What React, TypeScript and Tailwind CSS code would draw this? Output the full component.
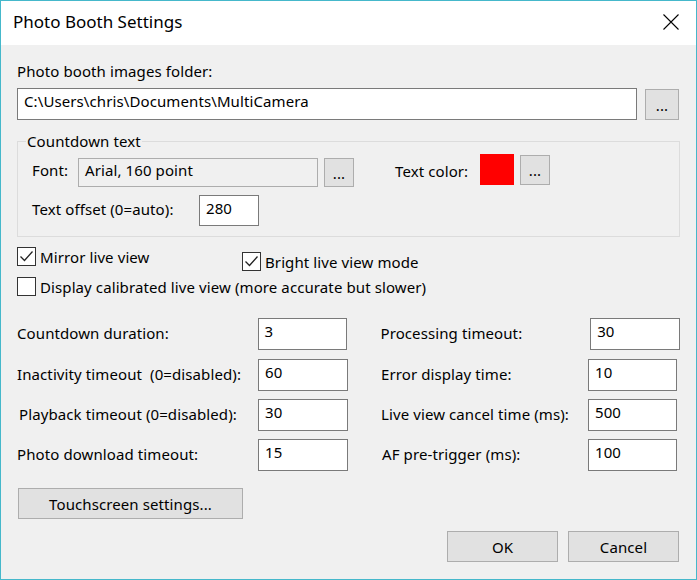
import type { ReactNode } from "react";

function Button({ className = "", children }: { className?: string; children: ReactNode }) {
  return (
    <div className={`flex items-center justify-center border border-[#adadad] bg-[#e1e1e1] ${className}`}>
      {children}
    </div>
  );
}

function TextBox({ value, className = "" }: { value: string; className?: string }) {
  return (
    <div className={`border border-[#7a7a7a] bg-white pl-[6px] pt-[2px] ${className}`}>{value}</div>
  );
}

function CheckBox({ checked, label, className = "" }: { checked: boolean; label: string; className?: string }) {
  return (
    <div className={`flex items-start ${className}`}>
      <svg width="19" height="19" viewBox="0 0 19 19" className="shrink-0">
        <rect x="0.5" y="0.5" width="18" height="18" fill="#fff" stroke="#333" />
        {checked && <polyline points="3.5,9.5 7.5,13.5 15.5,4.5" fill="none" stroke="#222" strokeWidth="1.3" />}
      </svg>
      <span className="ml-[4px]">{label}</span>
    </div>
  );
}

type Field = { label: string; value: string; labelClass?: string; inputClass?: string };

const rows: { left: Field; right: Field; mt: string }[] = [
  {
    left: { label: "Countdown duration:", value: "3" },
    right: { label: "Processing timeout:", value: "30", labelClass: "w-[210px]", inputClass: "w-[90px]" },
    mt: "mt-[21px]",
  },
  {
    left: { label: "Inactivity timeout\u00a0 (0=disabled):", value: "60" },
    right: { label: "Error display time:", value: "10" },
    mt: "mt-[9px]",
  },
  {
    left: { label: "Playback timeout (0=disabled):", value: "30", labelClass: "pl-[2px]" },
    right: { label: "Live view cancel time (ms):", value: "500" },
    mt: "mt-[8px]",
  },
  {
    left: { label: "Photo download timeout:", value: "15" },
    right: { label: "AF pre-trigger (ms):", value: "100", labelClass: "w-[207px] pl-[1px]" },
    mt: "mt-[8px]",
  },
];

export default function App() {
  return (
    <div className="flex h-[580px] w-[697px] flex-col border border-[#45b8cb] bg-[#f0f0f0] text-[15px] leading-[20px] tracking-[0.1px] text-black [font-family:'Noto_Sans','Open_Sans',sans-serif]">
      <div className="flex h-[44px] items-start justify-between bg-white">
        <div className="pl-[12px] pt-[11px] text-[17px] tracking-normal">Photo Booth Settings</div>
        <svg width="16" height="16" viewBox="0 0 16 16" className="mr-[17px] mt-[13px]">
          <path d="M0.5 0.5 L15.5 15.5 M15.5 0.5 L0.5 15.5" stroke="#000" strokeWidth="1.1" />
        </svg>
      </div>

      <div className="flex flex-col px-[16px]">
        <div className="mt-[16px]">Photo booth images folder:</div>
        <div className="mt-[7px] flex h-[32px] items-start gap-[8px]">
          <TextBox value="C:\Users\chris\Documents\MultiCamera" className="h-[32px] flex-1" />
          <Button className="mr-[1px] mt-[1px] h-[31px] w-[34px]">...</Button>
        </div>

        <fieldset className="mt-[11px] border border-[#dcdcdc] px-[8px] pb-[10px]">
          <legend className="px-[1px]">Countdown text</legend>
          <div className="pl-[6px]">
            <div className="mt-[3px] flex items-start">
              <span className="mt-[6px] w-[46px]">Font:</span>
              <div className="mt-[4px] h-[29px] w-[240px] border border-[#adadad] bg-[#f0f0f0] pl-[6px] pt-[1px]">
                Arial, 160 point
              </div>
              <Button className="ml-[6px] mt-[4px] h-[29px] w-[30px]">...</Button>
              <span className="ml-[41px] mt-[7px] w-[85px]">Text color:</span>
              <div className="h-[31px] w-[34px] bg-[#ff0000]" />
              <Button className="ml-[6px] mt-[1px] h-[30px] w-[30px]">...</Button>
            </div>
            <div className="mt-[8px] flex items-start">
              <span className="mt-[4px] w-[167px]">Text offset (0=auto):</span>
              <TextBox value="280" className="h-[31px] w-[60px]" />
            </div>
          </div>
        </fieldset>

        <div className="mt-[10px] flex items-start">
          <CheckBox checked label="Mirror live view" className="w-[225px]" />
          <CheckBox checked label="Bright live view mode" className="mt-[5px]" />
        </div>
        <CheckBox checked={false} label="Display calibrated live view (more accurate but slower)" className="mt-[5px]" />

        {rows.map((row) => (
          <div key={row.left.label} className={`flex h-[32px] items-start ${row.mt}`}>
            <span className={`mt-[5px] w-[241px] ${row.left.labelClass ?? ""}`}>{row.left.label}</span>
            <TextBox value={row.left.value} className="h-[32px] w-[90px]" />
            <span className={`ml-[33px] mt-[5px] ${row.right.labelClass ?? "w-[207px]"}`}>{row.right.label}</span>
            <TextBox value={row.right.value} className={`h-[32px] ${row.right.inputClass ?? "w-[89px]"}`} />
          </div>
        ))}

        <Button className="ml-[1px] mt-[17px] h-[31px] w-[225px]">Touchscreen settings...</Button>

        <div className="mr-[1px] mt-[12px] flex justify-end gap-[10px]">
          <Button className="h-[31px] w-[111px]">OK</Button>
          <Button className="h-[31px] w-[111px]">Cancel</Button>
        </div>
      </div>
    </div>
  );
}
